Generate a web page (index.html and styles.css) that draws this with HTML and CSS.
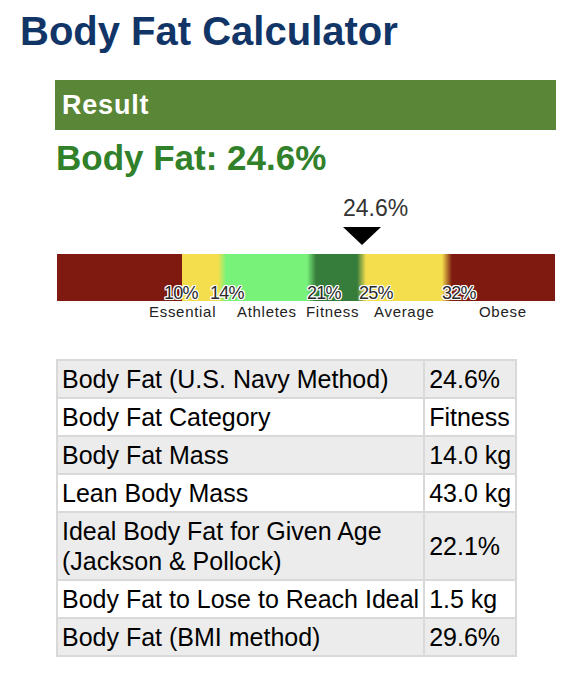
FILE: index.html
```html
<!DOCTYPE html>
<html>
<head>
<meta charset="utf-8">
<link rel="stylesheet" href="styles.css">
</head>
<body>
<h1 class="title">Body Fat Calculator</h1>
<div class="result-head">Result</div>
<div class="big-result">Body Fat: 24.6%</div>
<div class="scale">
  <div class="marker-value">24.6%</div>
  <div class="marker"></div>
  <div class="bar">
    <span class="pct" style="left:107px">10%</span>
    <span class="pct" style="left:153px">14%</span>
    <span class="pct" style="left:250px">21%</span>
    <span class="pct" style="left:302px">25%</span>
    <span class="pct" style="left:385px">32%</span>
  </div>
  <div class="cats">
    <span class="cat" style="left:92px">Essential</span>
    <span class="cat" style="left:180px">Athletes</span>
    <span class="cat" style="left:249px">Fitness</span>
    <span class="cat" style="left:317px">Average</span>
    <span class="cat" style="left:422px">Obese</span>
  </div>
</div>
<table class="results">
  <tr class="odd"><td>Body Fat (U.S. Navy Method)</td><td>24.6%</td></tr>
  <tr><td>Body Fat Category</td><td>Fitness</td></tr>
  <tr class="odd"><td>Body Fat Mass</td><td>14.0 kg</td></tr>
  <tr><td>Lean Body Mass</td><td>43.0 kg</td></tr>
  <tr class="odd"><td>Ideal Body Fat for Given Age<br>(Jackson &amp; Pollock)</td><td>22.1%</td></tr>
  <tr><td>Body Fat to Lose to Reach Ideal</td><td>1.5 kg</td></tr>
  <tr class="odd"><td>Body Fat (BMI method)</td><td>29.6%</td></tr>
</table>
</body>
</html>
```
FILE: styles.css
```css
* { box-sizing: border-box; }
html, body { margin: 0; padding: 0; background: #fff; }
body { font-family: "Liberation Sans", Arial, sans-serif; color: #000; }

.title {
  margin: 0;
  padding: 7px 0 0 20px;
  font-size: 40px;
  line-height: 48px;
  font-weight: bold;
  color: #123568;
}

.result-head {
  margin: 25px 0 0 55px;
  width: 501px;
  height: 50px;
  background: #5a8737;
  color: #fff;
  font-size: 27px;
  font-weight: bold;
  letter-spacing: 0.8px;
  line-height: 50px;
  padding-left: 7px;
}

.big-result {
  margin: 8px 0 0 56px;
  font-size: 35px;
  line-height: 40px;
  font-weight: bold;
  color: #31802a;
}

.scale {
  margin: 17px 0 0 57px;
  width: 498px;
}

.marker-value {
  margin-left: 286px;
  font-size: 23px;
  line-height: 26px;
  color: #333;
}

.marker {
  margin: 6px 0 0 286px;
  width: 0;
  height: 0;
  border-left: 19.5px solid transparent;
  border-right: 19.5px solid transparent;
  border-top: 18px solid #000;
}

.bar {
  position: relative;
  margin-top: 9px;
  height: 47px;
  background: linear-gradient(to right,
    #7e1a10 0, #7e1a10 125px,
    #f5de4d 125px, #f5de4d 161px,
    #79f27a 169px, #79f27a 250px,
    #367d3b 259px, #367d3b 300px,
    #f5de4d 309px, #f5de4d 385px,
    #7e1a10 395px, #7e1a10 100%);
}

.pct {
  position: absolute;
  bottom: -2px;
  font-size: 18px;
  line-height: 19px;
  letter-spacing: -0.8px;
  color: #2a2a2a;
  text-shadow: 1px 0 0 #fff, -1px 0 0 #fff, 0 1px 0 #fff, 0 -1px 0 #fff,
    1px 1px 0 #fff, -1px -1px 0 #fff, 1px -1px 0 #fff, -1px 1px 0 #fff;
}

.cats {
  position: relative;
  margin-top: 2px;
  height: 17px;
}

.cat {
  position: absolute;
  top: 0;
  font-size: 15px;
  line-height: 17px;
  letter-spacing: 0.7px;
  color: #222;
}

.results {
  margin: 39px 0 0 56px;
  border-collapse: collapse;
  font-size: 25px;
  line-height: 30px;
}

.results td {
  border: 2px solid #d9d9d9;
  padding: 3px 4px;
  white-space: nowrap;
  vertical-align: middle;
}

.results tr.odd td { background: #ececec; }
```
